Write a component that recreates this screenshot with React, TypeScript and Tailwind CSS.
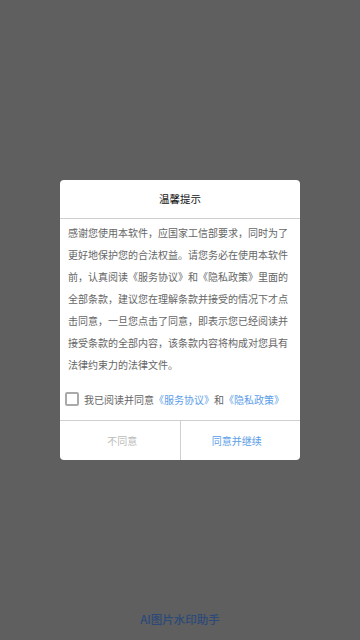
import React from 'react'

const LINK = 'text-[#5b9de8]'

export default function App() {
  return (
    <div
      className="relative flex h-[640px] w-[360px] flex-col justify-end overflow-hidden bg-[#5f5f5f]"
      style={{ fontFamily: '"Noto Sans CJK SC", "Noto Sans", sans-serif' }}
    >
      <div className="flex h-[34px] items-start justify-center pt-[5px] text-[11.5px] font-medium text-[#2b4979]">
        AI图片水印助手
      </div>

      <div className="absolute inset-0 flex items-center justify-center">
        <div className="w-[240px] overflow-hidden rounded-[4px] bg-white">
          <div className="flex h-[39px] items-center justify-center border-b border-[#cfcfcf] text-[10.5px] text-[#111]">
            温馨提示
          </div>
          <div className="px-[8px] pt-[3px] text-[10px] leading-[22px] text-[#666]">
            感谢您使用本软件，应国家工信部要求，同时为了更好地保护您的合法权益。请您务必在使用本软件前，认真阅读《服务协议》和《隐私政策》里面的全部条款，建议您在理解条款并接受的情况下才点击同意，一旦您点击了同意，即表示您已经阅读并接受条款的全部内容，该条款内容将构成对您具有法律约束力的法律文件。
          </div>
          <div className="mt-[11px] mb-[9px] flex h-[24px] items-center px-[5px] text-[10px] text-[#666]">
            <span className="mr-[5px] h-[14px] w-[14px] rounded-[2px] border-2 border-[#aaa]" />
            <span>我已阅读并同意</span>
            <span className={LINK}>《服务协议》</span>
            <span>和</span>
            <span className={LINK}>《隐私政策》</span>
          </div>
          <div className="flex h-[40px] border-t border-[#cfcfcf] text-[10px]">
            <div className="flex flex-1 items-center justify-center border-r border-[#cfcfcf] text-[#bbb]">
              <span className="ml-[5px]">不同意</span>
            </div>
            <div className={`flex flex-1 items-center justify-center ${LINK}`}>
              <span className="mr-[7px]">同意并继续</span>
            </div>
          </div>
        </div>
      </div>
    </div>
  )
}
